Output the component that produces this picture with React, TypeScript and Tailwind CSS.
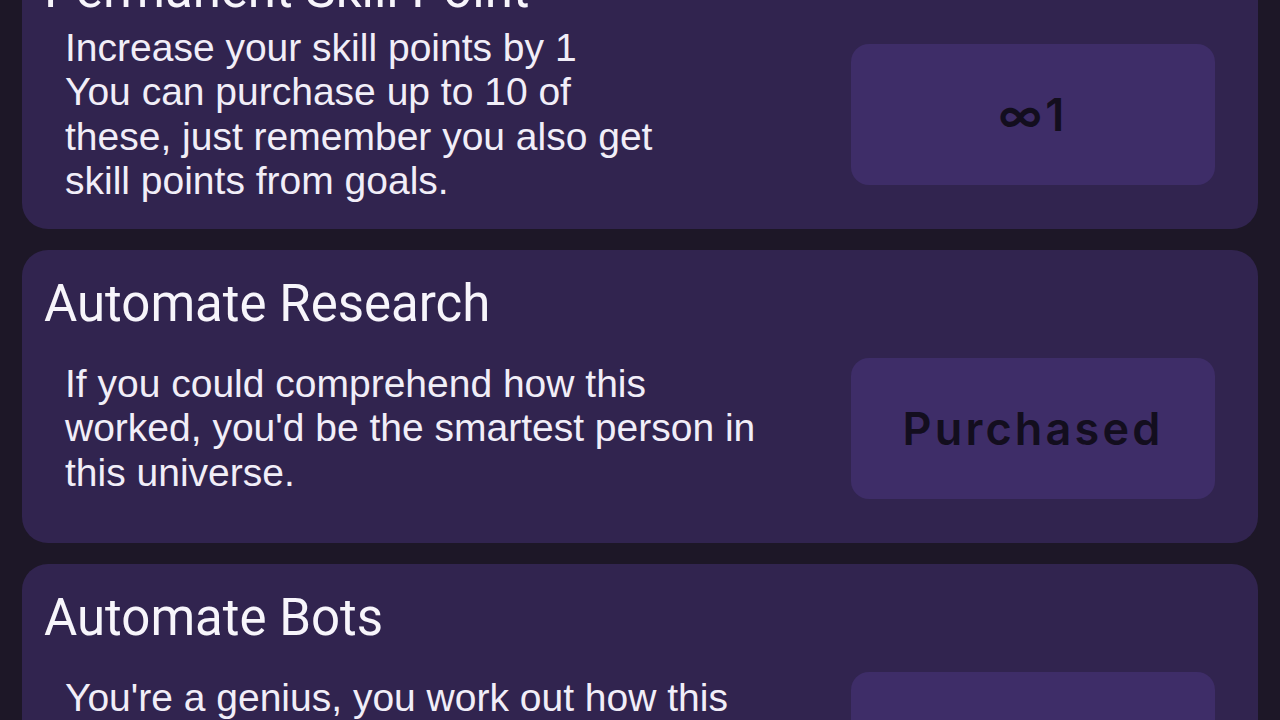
import React from 'react';

type Upgrade = {
  title: string;
  lines?: string[];
  text?: string;
  button: string;
};

const upgrades: Upgrade[] = [
  {
    title: 'Permanent Skill Point',
    lines: [
      'Increase your skill points by 1',
      'You can purchase up to 10 of',
      'these, just remember you also get',
      'skill points from goals.',
    ],
    button: '∞1',
  },
  {
    title: 'Automate Research',
    text: "If you could comprehend how this worked, you'd be the smartest person in this universe.",
    button: 'Purchased',
  },
  {
    title: 'Automate Bots',
    text: "You're a genius, you work out how this works and your bots now build themselves.",
    button: 'Purchased',
  },
];

function UpgradeCard({ upgrade }: { upgrade: Upgrade }) {
  return (
    <div className="rounded-[26px] bg-[#31244f] p-[22px]">
      <h2 className="pt-[4px] font-['Roboto',sans-serif] text-[51px] leading-[55px] text-[#f7f5fb]">
        {upgrade.title}
      </h2>
      <div className="mt-[5px] flex items-center">
        <div className="w-[720px] pl-[21px] font-['Liberation_Sans',Arial,sans-serif] text-[39px] leading-[44.5px] text-[#f1eef8]">
          {upgrade.lines
            ? upgrade.lines.map((l) => <div key={l}>{l}</div>)
            : upgrade.text}
        </div>
        <div className="ml-auto mr-[21px] my-[22px] flex h-[141px] w-[364px] shrink-0 items-center justify-center rounded-[18px] bg-[#3e2d68]">
          <span className="font-['Inter',sans-serif] text-[45px] font-semibold tracking-[0.07em] text-[#130e1e]">
            {upgrade.button}
          </span>
        </div>
      </div>
    </div>
  );
}

export default function App() {
  return (
    <div className="h-[720px] w-[1280px] overflow-hidden bg-[#1d1727]">
      <div className="-mt-[64px] flex flex-col gap-[21px] px-[22px]">
        {upgrades.map((u) => (
          <UpgradeCard key={u.title} upgrade={u} />
        ))}
      </div>
    </div>
  );
}
